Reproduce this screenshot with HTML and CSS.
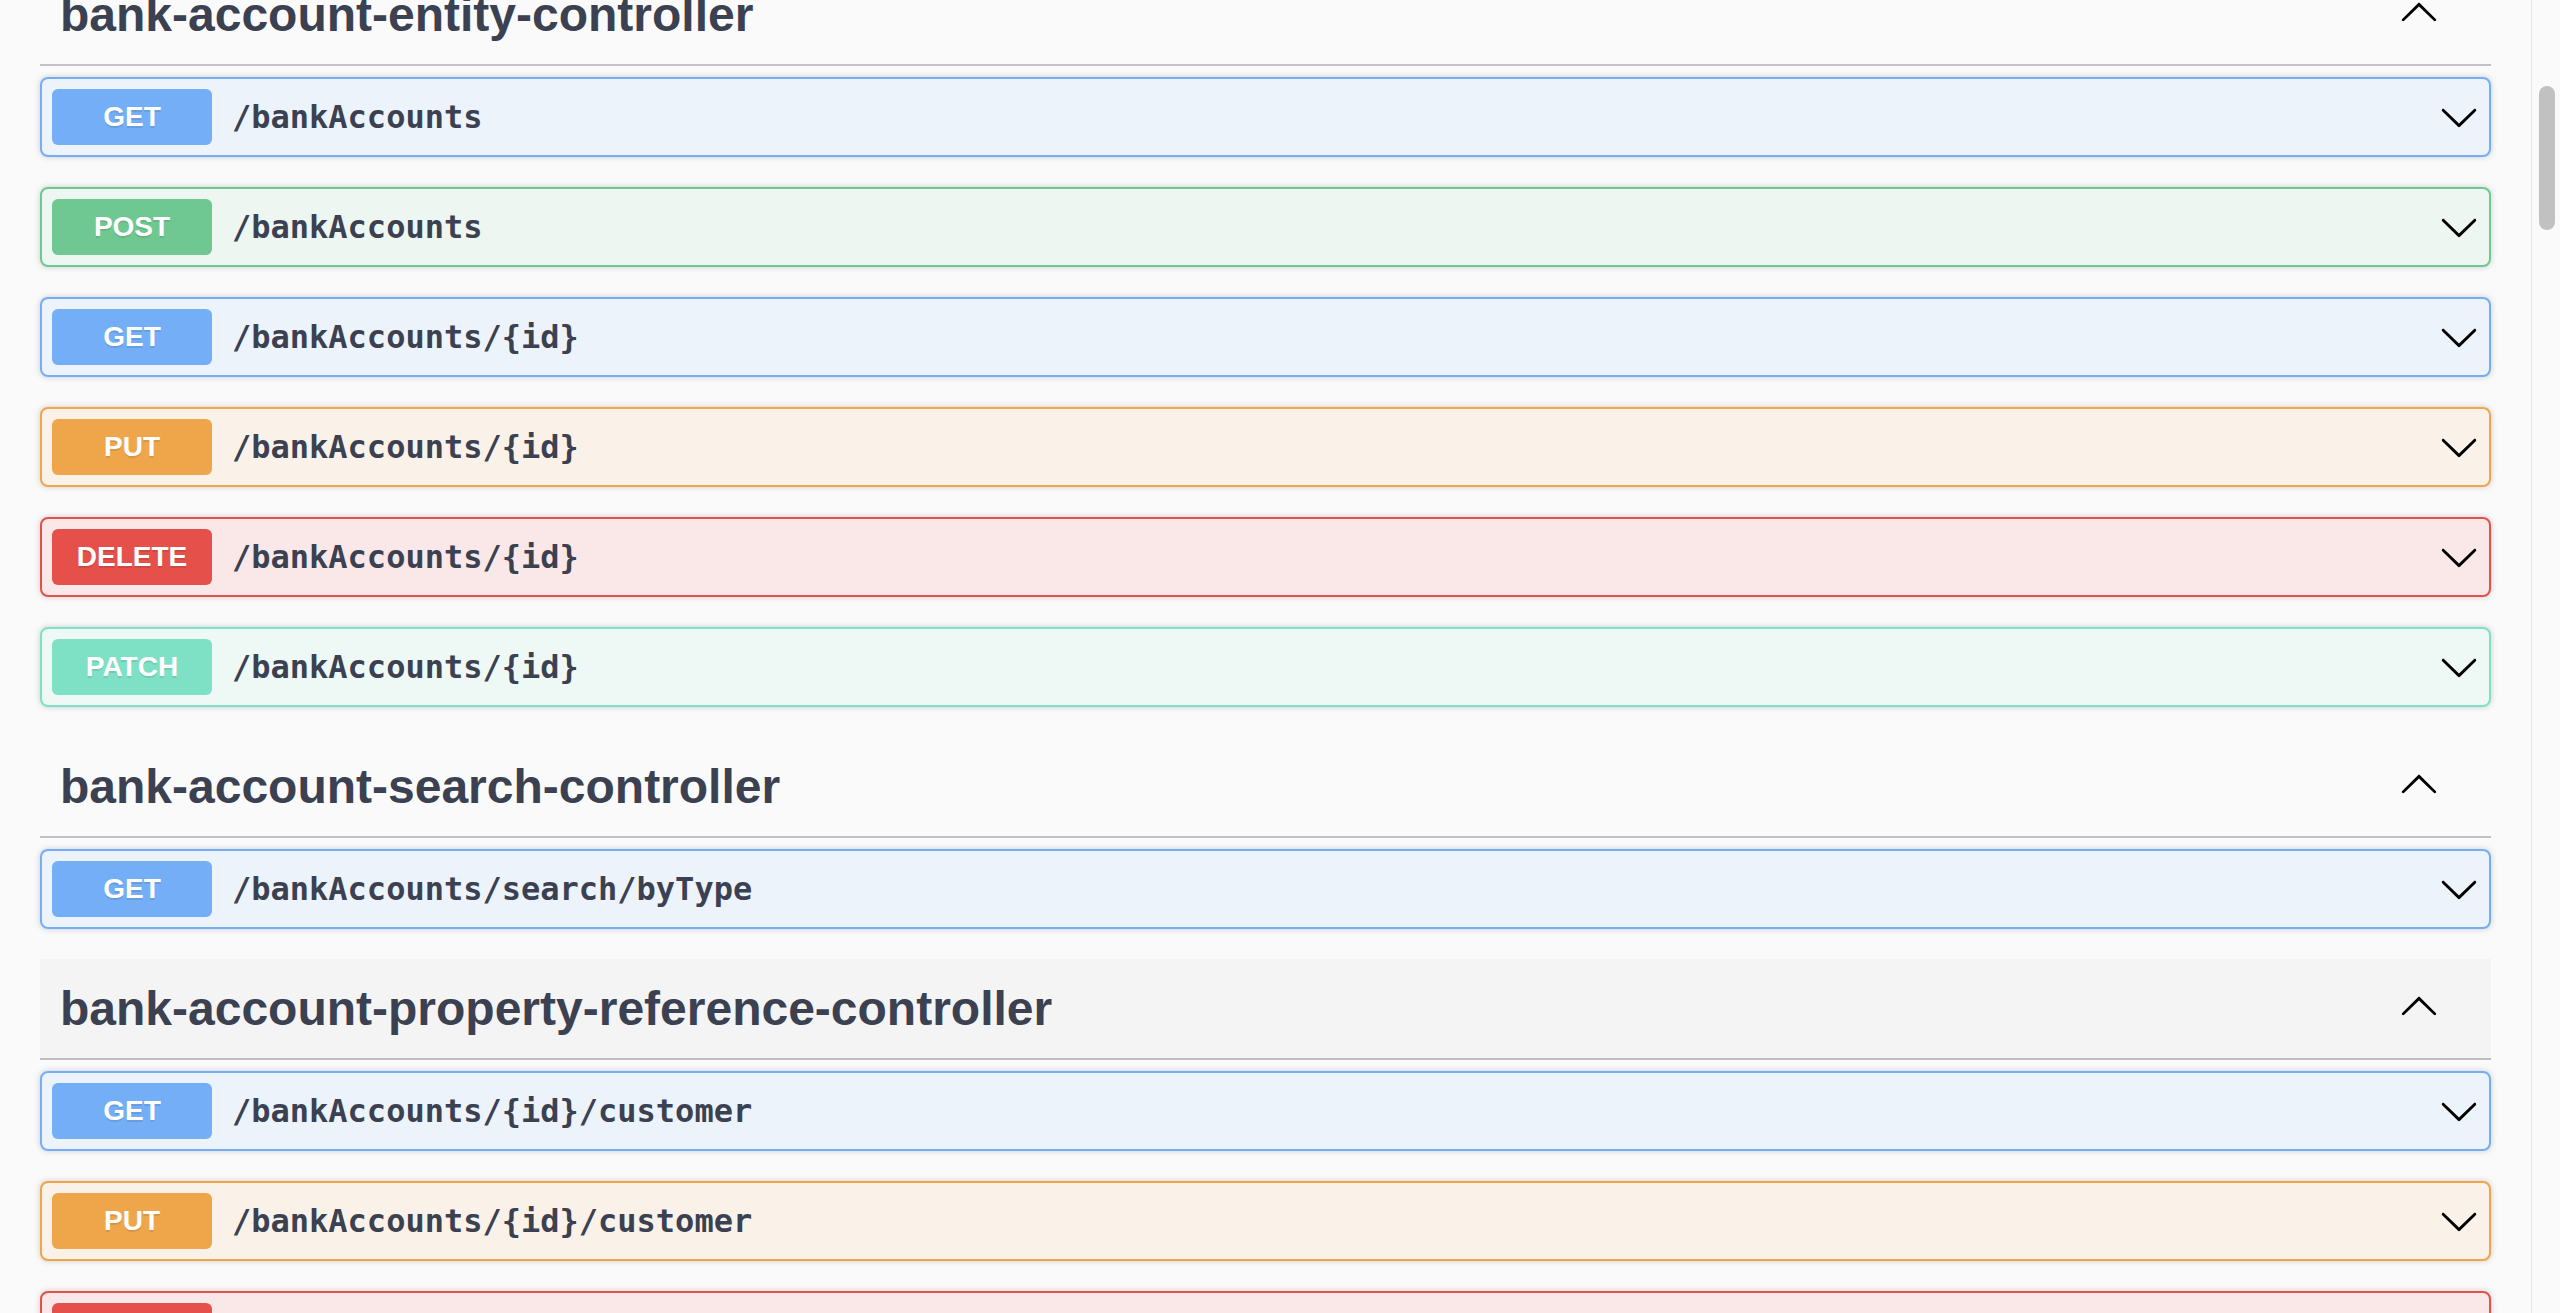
FILE: index.html
```html
<!DOCTYPE html>
<html lang="en">
<head>
<meta charset="utf-8">
<title>Swagger UI</title>
<link rel="stylesheet" href="styles.css">
</head>
<body>
<div class="page">
  <main class="main">
    <section class="tag-section first">
      <h3 class="tag">
        <span class="tag-name">bank-account-entity-controller</span>
        <svg class="tag-arrow" viewBox="0 0 20 20" width="40" height="40"><path d="M17.418 14.908c.272.268.709.268.979 0s.271-.701 0-.969l-7.908-7.830c-.27-.268-.707-.268-.979 0l-7.908 7.830c-.27.268-.27.701 0 .969.271.268.709.268.979 0L10 7.767l7.418 7.141z"/></svg>
      </h3>
      <div class="op op-get"><span class="method">GET</span><span class="path">/bankAccounts</span><svg class="op-arrow" viewBox="0 0 20 20" width="40" height="40"><path d="M17.418 6.109c.272-.268.709-.268.979 0s.271.701 0 .969l-7.908 7.83c-.27.268-.707.268-.979 0l-7.908-7.83c-.27-.268-.27-.701 0-.969.271-.268.709-.268.979 0L10 13.25l7.418-7.141z"/></svg></div>
      <div class="op op-post"><span class="method">POST</span><span class="path">/bankAccounts</span><svg class="op-arrow" viewBox="0 0 20 20" width="40" height="40"><path d="M17.418 6.109c.272-.268.709-.268.979 0s.271.701 0 .969l-7.908 7.83c-.27.268-.707.268-.979 0l-7.908-7.83c-.27-.268-.27-.701 0-.969.271-.268.709-.268.979 0L10 13.25l7.418-7.141z"/></svg></div>
      <div class="op op-get"><span class="method">GET</span><span class="path">/bankAccounts/{id}</span><svg class="op-arrow" viewBox="0 0 20 20" width="40" height="40"><path d="M17.418 6.109c.272-.268.709-.268.979 0s.271.701 0 .969l-7.908 7.83c-.27.268-.707.268-.979 0l-7.908-7.83c-.27-.268-.27-.701 0-.969.271-.268.709-.268.979 0L10 13.25l7.418-7.141z"/></svg></div>
      <div class="op op-put"><span class="method">PUT</span><span class="path">/bankAccounts/{id}</span><svg class="op-arrow" viewBox="0 0 20 20" width="40" height="40"><path d="M17.418 6.109c.272-.268.709-.268.979 0s.271.701 0 .969l-7.908 7.83c-.27.268-.707.268-.979 0l-7.908-7.83c-.27-.268-.27-.701 0-.969.271-.268.709-.268.979 0L10 13.25l7.418-7.141z"/></svg></div>
      <div class="op op-delete"><span class="method">DELETE</span><span class="path">/bankAccounts/{id}</span><svg class="op-arrow" viewBox="0 0 20 20" width="40" height="40"><path d="M17.418 6.109c.272-.268.709-.268.979 0s.271.701 0 .969l-7.908 7.83c-.27.268-.707.268-.979 0l-7.908-7.83c-.27-.268-.27-.701 0-.969.271-.268.709-.268.979 0L10 13.25l7.418-7.141z"/></svg></div>
      <div class="op op-patch"><span class="method">PATCH</span><span class="path">/bankAccounts/{id}</span><svg class="op-arrow" viewBox="0 0 20 20" width="40" height="40"><path d="M17.418 6.109c.272-.268.709-.268.979 0s.271.701 0 .969l-7.908 7.83c-.27.268-.707.268-.979 0l-7.908-7.83c-.27-.268-.27-.701 0-.969.271-.268.709-.268.979 0L10 13.25l7.418-7.141z"/></svg></div>
    </section>

    <section class="tag-section">
      <h3 class="tag">
        <span class="tag-name">bank-account-search-controller</span>
        <svg class="tag-arrow" viewBox="0 0 20 20" width="40" height="40"><path d="M17.418 14.908c.272.268.709.268.979 0s.271-.701 0-.969l-7.908-7.830c-.27-.268-.707-.268-.979 0l-7.908 7.830c-.27.268-.27.701 0 .969.271.268.709.268.979 0L10 7.767l7.418 7.141z"/></svg>
      </h3>
      <div class="op op-get"><span class="method">GET</span><span class="path">/bankAccounts/search/byType</span><svg class="op-arrow" viewBox="0 0 20 20" width="40" height="40"><path d="M17.418 6.109c.272-.268.709-.268.979 0s.271.701 0 .969l-7.908 7.83c-.27.268-.707.268-.979 0l-7.908-7.83c-.27-.268-.27-.701 0-.969.271-.268.709-.268.979 0L10 13.25l7.418-7.141z"/></svg></div>
    </section>

    <section class="tag-section">
      <h3 class="tag tag-hover">
        <span class="tag-name">bank-account-property-reference-controller</span>
        <svg class="tag-arrow" viewBox="0 0 20 20" width="40" height="40"><path d="M17.418 14.908c.272.268.709.268.979 0s.271-.701 0-.969l-7.908-7.830c-.27-.268-.707-.268-.979 0l-7.908 7.830c-.27.268-.27.701 0 .969.271.268.709.268.979 0L10 7.767l7.418 7.141z"/></svg>
      </h3>
      <div class="op op-get"><span class="method">GET</span><span class="path">/bankAccounts/{id}/customer</span><svg class="op-arrow" viewBox="0 0 20 20" width="40" height="40"><path d="M17.418 6.109c.272-.268.709-.268.979 0s.271.701 0 .969l-7.908 7.83c-.27.268-.707.268-.979 0l-7.908-7.83c-.27-.268-.27-.701 0-.969.271-.268.709-.268.979 0L10 13.25l7.418-7.141z"/></svg></div>
      <div class="op op-put"><span class="method">PUT</span><span class="path">/bankAccounts/{id}/customer</span><svg class="op-arrow" viewBox="0 0 20 20" width="40" height="40"><path d="M17.418 6.109c.272-.268.709-.268.979 0s.271.701 0 .969l-7.908 7.83c-.27.268-.707.268-.979 0l-7.908-7.83c-.27-.268-.27-.701 0-.969.271-.268.709-.268.979 0L10 13.25l7.418-7.141z"/></svg></div>
      <div class="op op-delete"><span class="method">DELETE</span><span class="path">/bankAccounts/{id}/customer</span><svg class="op-arrow" viewBox="0 0 20 20" width="40" height="40"><path d="M17.418 6.109c.272-.268.709-.268.979 0s.271.701 0 .969l-7.908 7.83c-.27.268-.707.268-.979 0l-7.908-7.83c-.27-.268-.27-.701 0-.969.271-.268.709-.268.979 0L10 13.25l7.418-7.141z"/></svg></div>
    </section>
  </main>
  <div class="scrollbar"><div class="thumb"></div></div>
</div>
</body>
</html>
```

FILE: styles.css
```css
html, body {
  margin: 0;
  padding: 0;
  height: 1313px;
  overflow: hidden;
  background: #fafafa;
}

.page {
  display: flex;
  height: 1313px;
  overflow: hidden;
}

.main {
  flex: 1;
  padding: 0 40px;
  overflow: hidden;
  font-family: "Liberation Sans", Arial, sans-serif;
  color: #3b4151;
}

.tag-section {
  display: flex;
  flex-direction: column;
}

.tag-section.first {
  margin-top: -35px;
}

.tag {
  box-sizing: border-box;
  height: 101px;
  margin: 0 0 11px;
  padding: 0 52px 0 20px;
  display: flex;
  align-items: center;
  border-bottom: 2px solid rgba(59, 65, 81, 0.3);
  font-size: 48px;
  font-weight: bold;
  color: #3b4151;
}

.tag-hover {
  background: #f4f4f4;
}

.tag-name {
  flex: 1;
  white-space: nowrap;
}

.tag-arrow {
  flex: none;
  margin-bottom: 7px;
  fill: #000;
}

.op {
  box-sizing: border-box;
  height: 80px;
  margin: 0 0 30px;
  padding: 0 10px;
  display: flex;
  align-items: center;
  border: 2px solid;
  border-radius: 8px;
  box-shadow: 0 0 6px rgba(0, 0, 0, 0.19);
}

.method {
  flex: none;
  box-sizing: border-box;
  width: 160px;
  height: 56px;
  display: flex;
  align-items: center;
  justify-content: center;
  border-radius: 6px;
  font-family: "Liberation Sans", Arial, sans-serif;
  font-size: 28px;
  font-weight: bold;
  color: #fff;
  text-shadow: 0 2px 0 rgba(0, 0, 0, 0.1);
}

.path {
  flex: 1;
  padding: 0 20px;
  font-family: "DejaVu Sans Mono", "Liberation Mono", monospace;
  font-size: 32px;
  font-weight: 600;
  color: #3b4151;
  white-space: nowrap;
}

.op-arrow {
  flex: none;
  fill: #000;
}

.op-get { background: #ecf3fb; border-color: #73aef6; }
.op-get .method { background: #73aef6; }

.op-post { background: #edf6f0; border-color: #6fc892; }
.op-post .method { background: #6fc892; }

.op-put { background: #faf2e8; border-color: #efa64b; }
.op-put .method { background: #efa64b; }

.op-delete { background: #f9e8e7; border-color: #e5504b; }
.op-delete .method { background: #e5504b; }

.op-patch { background: #eef8f5; border-color: #7ee1c5; }
.op-patch .method { background: #7ee1c5; }

.scrollbar {
  flex: none;
  width: 29px;
  border-left: 1px solid #e6e6e6;
  background: #fafafa;
  padding: 86px 0 0 7px;
  box-sizing: border-box;
}

.thumb {
  width: 16px;
  height: 144px;
  border-radius: 8px;
  background: #c1c1c1;
}
```
